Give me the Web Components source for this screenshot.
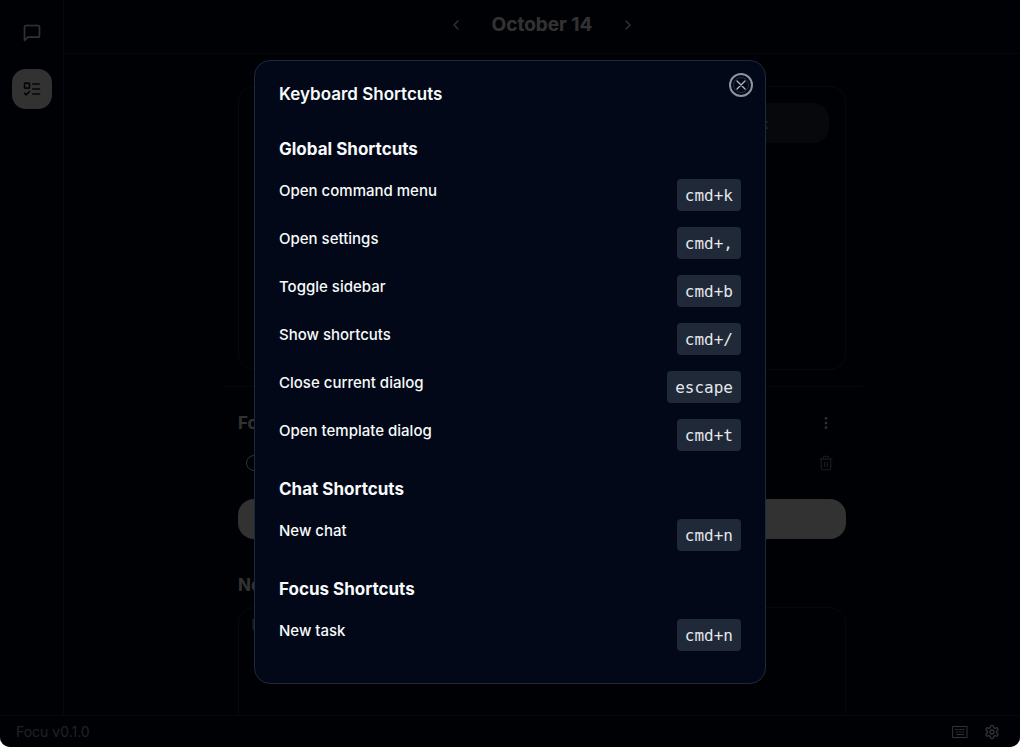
<!DOCTYPE html>
<html lang="en">
<head>
<meta charset="utf-8">
<meta name="viewport" content="width=device-width, initial-scale=1">
<title>Focu</title>
<style>
html{height:100%;background:#fff}
body{margin:0;height:100%;font-family:Inter,"Liberation Sans",sans-serif;color:#f8fafc;
--bg:#020817;--line:#1e293b;--muted:#94a3b8;--primary:#f8fafc;overflow:hidden}
</style>
</head>
<body>
<focu-app>
  <focu-sidebar slot="sidebar"></focu-sidebar>
  <focu-date-bar slot="header">October 14</focu-date-bar>
  <focu-day slot="content"></focu-day>
  <focu-status slot="footer">Focu v0.1.0</focu-status>
  <focu-dialog slot="dialog" heading="Keyboard Shortcuts">
    <shortcut-group heading="Global Shortcuts">
      <shortcut-row keys="cmd+k">Open command menu</shortcut-row>
      <shortcut-row keys="cmd+,">Open settings</shortcut-row>
      <shortcut-row keys="cmd+b">Toggle sidebar</shortcut-row>
      <shortcut-row keys="cmd+/">Show shortcuts</shortcut-row>
      <shortcut-row keys="escape">Close current dialog</shortcut-row>
      <shortcut-row keys="cmd+t">Open template dialog</shortcut-row>
    </shortcut-group>
    <shortcut-group heading="Chat Shortcuts">
      <shortcut-row keys="cmd+n">New chat</shortcut-row>
    </shortcut-group>
    <shortcut-group heading="Focus Shortcuts">
      <shortcut-row keys="cmd+n">New task</shortcut-row>
    </shortcut-group>
  </focu-dialog>
</focu-app>
<script>
const BASE = `<style>
*{box-sizing:border-box}
button{font:inherit;color:inherit;background:none;border:0;padding:0;margin:0;display:flex;align-items:center;justify-content:center}
svg{display:block;fill:none;stroke:currentColor;stroke-width:2;stroke-linecap:round;stroke-linejoin:round}
h1,h2,h3,p{margin:0}
</style>`;
const icon = (size, body, box = 24) => `<svg width="${size}" height="${size}" viewBox="0 0 ${box} ${box}" aria-hidden="true">${body}</svg>`;
function define(name, render) {
  customElements.define(name, class extends HTMLElement {
    constructor() {
      super();
      this.attachShadow({ mode: 'open' }).innerHTML = BASE + render(this);
    }
  });
}

define('focu-app', () => `<style>
:host{display:block;height:100%}
.window{display:flex;flex-direction:column;height:100%;background:var(--bg);position:relative;overflow:hidden;border-radius:0 0 10px 10px}
.body{display:flex;flex:1;min-height:0}
.main{flex:1;min-width:0;display:flex;flex-direction:column}
.content{flex:1;min-height:0;overflow:hidden}
.overlay{position:absolute;inset:0;background:rgba(0,0,0,.8);display:flex;align-items:center;justify-content:center;padding:0 16px 3px}
</style>
<div class="window">
<div class="body"><slot name="sidebar"></slot>
<div class="main"><slot name="header"></slot><div class="content"><slot name="content"></slot></div></div></div>
<slot name="footer"></slot>
<div class="overlay"><slot name="dialog"></slot></div>
</div>`);

define('focu-sidebar', () => `<style>
:host{display:block;flex:none;border-right:1px solid var(--line)}
nav{display:flex;flex-direction:column;gap:16px;padding:13px 11px 12px 12px}
button{width:40px;height:40px;border-radius:14px}
.active{background:var(--primary);color:#0f172a}
</style>
<nav aria-label="Views">
<button type="button" aria-label="Chat">${icon(20, '<path d="M21 15a2 2 0 0 1-2 2H7l-4 4V5a2 2 0 0 1 2-2h14a2 2 0 0 1 2 2z"/>')}</button>
<button type="button" class="active" aria-label="Focus">${icon(20, '<rect x="3" y="5" width="6" height="6" rx="1"/><path d="m3 17 2 2 4-4M13 6h8M13 12h8M13 18h8"/>')}</button>
</nav>`);

define('focu-date-bar', () => `<style>
:host{display:block;flex:none;border-bottom:1px solid var(--line)}
header{display:flex;align-items:center;justify-content:center;gap:28px;height:53px;padding-bottom:4px}
h1{font-size:19px;line-height:28px;font-weight:700}
button{width:16px;height:28px}
</style>
<header>
<button type="button" aria-label="Previous day">${icon(16, '<path d="m15 18-6-6 6-6"/>')}</button>
<h1><slot></slot></h1>
<button type="button" aria-label="Next day">${icon(16, '<path d="m9 18 6-6-6-6"/>')}</button>
</header>`);

define('focu-day', () => `<style>
:host{display:block}
.column{max-width:640px;margin:0 auto;padding-top:32px}
section{margin:0 16px}
.timer{height:284px;border:1px solid var(--line);border-radius:16px;padding:16px}
.tabs{display:grid;grid-template-columns:repeat(3,1fr);height:40px;padding:4px;border-radius:16px;background:#1e293b;color:var(--muted);font-size:14px;font-weight:500}
.tabs button{border-radius:12px}
hr{border:0;border-top:1px solid var(--line);margin:16px 0}
.head{display:flex;align-items:center;justify-content:space-between;height:40px;padding-right:12px}
h2{font-size:17px;line-height:28px;font-weight:700}
.task{display:flex;align-items:center;justify-content:space-between;height:40px;padding:0 12px 0 8px;color:var(--muted)}
.task button{opacity:.7}
input{appearance:none;width:16px;height:16px;border:1px solid var(--primary);border-radius:50%;margin:0}
.add{width:100%;height:40px;margin-top:16px;border-radius:16px;background:var(--primary);color:#0f172a;font-size:14px;font-weight:500}
.notes{padding-top:32px}
textarea{display:block;width:100%;height:160px;margin-top:8px;padding:8px 12px;border:1px solid var(--line);border-radius:16px;background:none;color:inherit;font:inherit;font-size:17px;line-height:20px;resize:none;outline:0}
textarea::placeholder{color:var(--muted)}
</style>
<div class="column">
<section class="timer"><div class="tabs" role="tablist">
<button type="button" role="tab">Focus</button><button type="button" role="tab">Short Break</button><button type="button" role="tab">Long Break</button></div></section>
<hr>
<section>
<div class="head"><h2>Focus</h2><button type="button" aria-label="More">${icon(16, '<circle cx="12" cy="12" r="1"/><circle cx="12" cy="5" r="1"/><circle cx="12" cy="19" r="1"/>')}</button></div>
<div class="task"><input type="checkbox" aria-label="Done"><button type="button" aria-label="Delete">${icon(16, '<path d="M3 6h18M19 6v14a2 2 0 0 1-2 2H7a2 2 0 0 1-2-2V6M8 6V4a2 2 0 0 1 2-2h4a2 2 0 0 1 2 2v2M10 11v6M14 11v6"/>')}</button></div>
<button type="button" class="add">Add task</button>
</section>
<section class="notes"><h2>Notes</h2><textarea aria-label="Notes" placeholder="Use this space"></textarea></section>
</div>`);

define('focu-status', () => `<style>
:host{display:block;flex:none;border-top:1px solid var(--line)}
footer{display:flex;align-items:center;justify-content:space-between;height:31px;padding:1px 20px 0 16px;font-size:14px;line-height:20px}
span{color:var(--muted)}
div{display:flex;gap:16px}
</style>
<footer><span><slot></slot></span><div>
<button type="button" aria-label="Keyboard shortcuts">${icon(16, '<path d="M1 2.500h14v11H1zM3.500 5.500h1M6 5.500h1M8.500 5.500h1M11 5.500h1M4.500 8h1M7.500 8h1M10.500 8h1M4.500 10.500h7" stroke-width="1"/>', 16)}</button>
<button type="button" aria-label="Settings">${icon(16, '<path d="M12.220 2h-.44a2 2 0 0 0-2 2v.18a2 2 0 0 1-1 1.730l-.43.25a2 2 0 0 1-2 0l-.15-.08a2 2 0 0 0-2.730.73l-.22.38a2 2 0 0 0 .73 2.730l.15.1a2 2 0 0 1 1 1.720v.51a2 2 0 0 1-1 1.740l-.15.09a2 2 0 0 0-.73 2.730l.22.38a2 2 0 0 0 2.730.73l.15-.08a2 2 0 0 1 2 0l.43.25a2 2 0 0 1 1 1.730V20a2 2 0 0 0 2 2h.44a2 2 0 0 0 2-2v-.18a2 2 0 0 1 1-1.730l.43-.25a2 2 0 0 1 2 0l.15.08a2 2 0 0 0 2.730-.73l.22-.39a2 2 0 0 0-.73-2.730l-.15-.08a2 2 0 0 1-1-1.740v-.5a2 2 0 0 1 1-1.740l.15-.09a2 2 0 0 0 .73-2.730l-.22-.38a2 2 0 0 0-2.730-.73l-.15.08a2 2 0 0 1-2 0l-.43-.25a2 2 0 0 1-1-1.730V4a2 2 0 0 0-2-2z"/><circle cx="12" cy="12" r="3"/>')}</button>
</div></footer>`);

define('focu-dialog', el => `<style>
:host{display:block;width:100%;max-width:512px}
.dialog{position:relative;background:var(--bg);border:1px solid var(--line);border-radius:16px;padding:24px}
h2{font-size:17px;line-height:18px;font-weight:600}
.groups{display:flex;flex-direction:column;gap:24px;padding:32px 0 8px}
.close{position:absolute;top:12px;right:12px;width:24px;height:24px;border-radius:50%;color:#b4b7bd;border:2px solid #8d92a2}
</style>
<div class="dialog" role="dialog" aria-labelledby="title">
<h2 id="title">${el.getAttribute('heading')}</h2>
<div class="groups"><slot></slot></div>
<button type="button" class="close" aria-label="Close">${icon(20, '<circle cx="10" cy="10" r="7.500" stroke="#2a3040" stroke-width="1"/><path d="m6 6 8 8M14 6l-8 8" stroke-width="1.300"/>', 20)}</button>
</div>`);

define('shortcut-group', el => `<style>
:host{display:block}
h3{font-size:17px;line-height:28px;font-weight:700}
.rows{display:flex;flex-direction:column;gap:16px;margin-top:16px}
</style>
<h3>${el.getAttribute('heading')}</h3><div class="rows"><slot></slot></div>`);

define('shortcut-row', el => `<style>
:host{display:flex;justify-content:space-between;align-items:flex-start;font-size:15px;line-height:24px;font-weight:500}
kbd{font-family:"DejaVu Sans Mono","Liberation Mono",monospace;font-size:16px;font-weight:400;line-height:24px;padding:5px 8px 3px;border-radius:4px;background:#1f2937;color:#e5e7eb}
</style>
<span><slot></slot></span><kbd>${el.getAttribute('keys')}</kbd>`);
</script>
</body>
</html>
